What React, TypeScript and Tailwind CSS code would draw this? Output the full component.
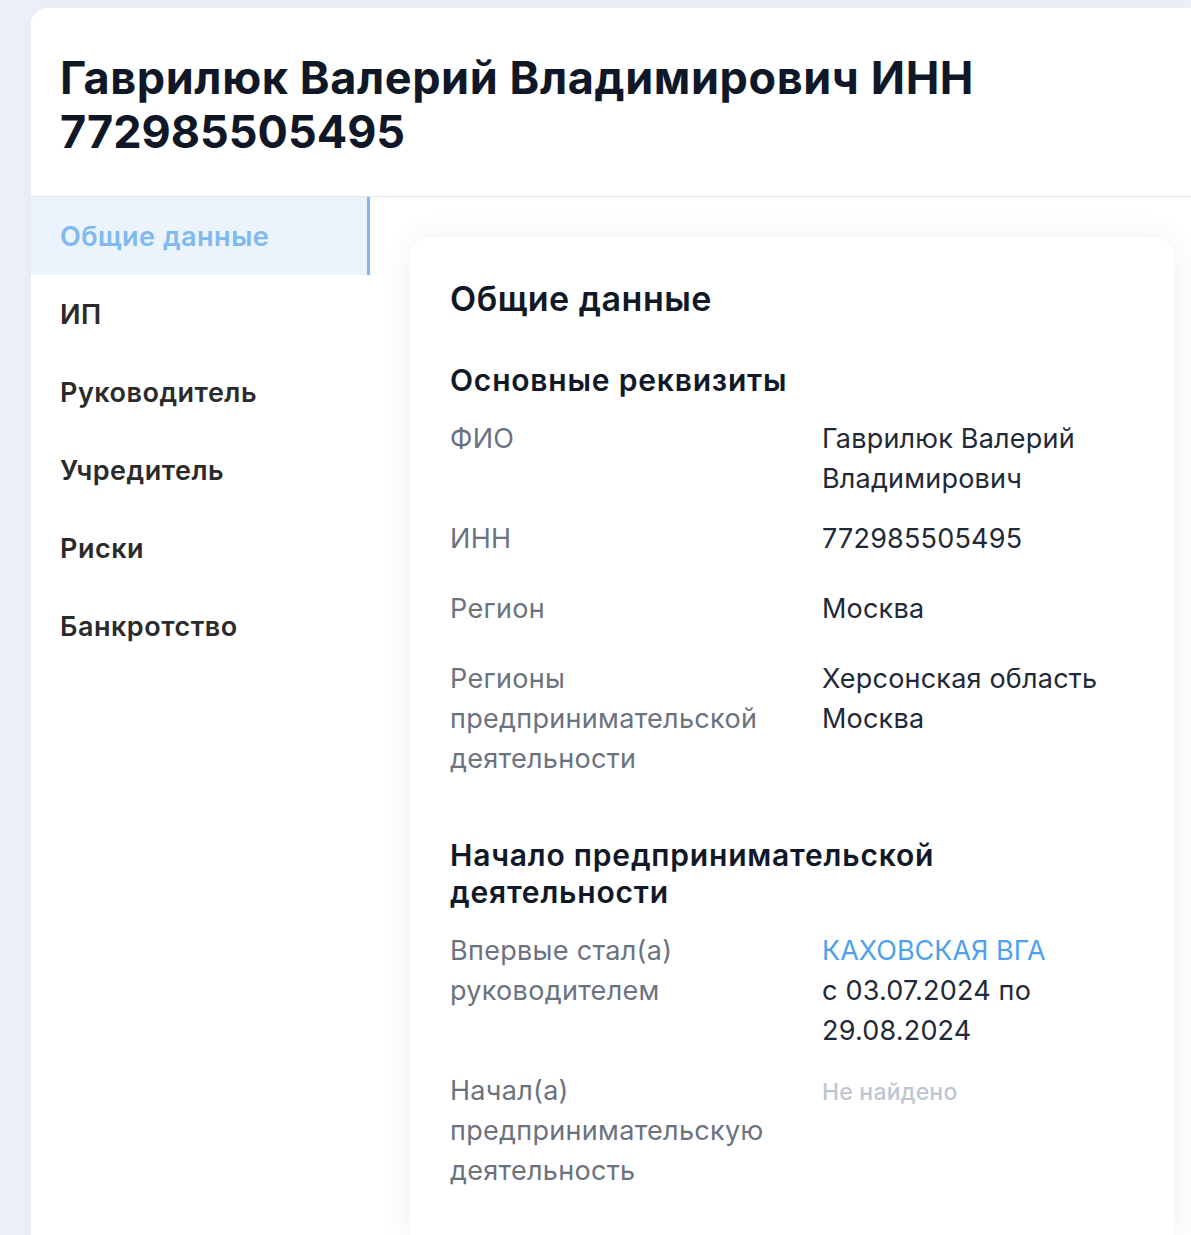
import React from "react";

const font = { fontFamily: 'Inter, "Noto Sans", sans-serif' };

function Row({ label, children }: { label: React.ReactNode; children: React.ReactNode }) {
  return (
    <div className="grid grid-cols-[372px_1fr] min-h-[50px]">
      <div className="text-[27px] leading-[40px] tracking-[0.3px] text-[#6b7280] pr-4">{label}</div>
      <div className="text-[27px] leading-[40px] tracking-[0.2px] text-[#1f2937]">{children}</div>
    </div>
  );
}

export default function App() {
  const nav = ["ИП", "Руководитель", "Учредитель", "Риски", "Банкротство"];
  return (
    <div className="min-h-[1235px] h-[1235px] overflow-hidden bg-[#edf1f7] pl-[31px] pt-[8px]" style={font}>
      <div className="bg-white rounded-tl-[16px] h-full shadow-[0_0_24px_rgba(0,0,0,0.04)]">
        <div className="h-[189px] border-b border-[#e5e7eb] pl-[29px] pt-[43px]">
          <h1 className="text-[45px] leading-[54px] font-bold text-[#101827] tracking-[0.6px]">
            Гаврилюк Валерий Владимирович ИНН
            <br />
            <span className="tracking-[0px]">772985505495</span>
          </h1>
        </div>
        <div className="flex">
          <div className="w-[339px] shrink-0">
            <div className="h-[78px] bg-[#ebf3fc] border-r-[3px] border-[#86b4ea] flex items-center pt-[3px] pl-[29px] text-[27px] tracking-[0.5px] font-semibold text-[#80b8f0]">
              Общие данные
            </div>
            {nav.map((n) => (
              <div key={n} className="h-[78px] flex items-center pt-[3px] pl-[29px] text-[27px] tracking-[0.5px] font-semibold text-[#2b2b2b]">
                {n}
              </div>
            ))}
          </div>
          <div className="pl-[40px] pt-[40px] pr-[17px] flex-1">
            <div className="bg-white rounded-[20px] shadow-[0_0_30px_rgba(30,50,80,0.08)] pl-[40px] pr-[30px] pt-[40px] pb-[60px] min-h-[1000px]">
              <h2 className="text-[34px] leading-[44px] tracking-[0.5px] font-semibold text-[#111827]">Общие данные</h2>
              <h3 className="mt-[40px] text-[30px] leading-[38px] tracking-[0.8px] font-semibold text-[#111827]">Основные реквизиты</h3>
              <div className="mt-[20px] flex flex-col gap-[20px]">
                <Row label="ФИО">
                  Гаврилюк Валерий
                  <br />
                  Владимирович
                </Row>
                <Row label="ИНН">772985505495</Row>
                <Row label="Регион">Москва</Row>
                <Row label={<>Регионы<br />предпринимательской<br />деятельности</>}>
                  Херсонская область
                  <br />
                  Москва
                </Row>
              </div>
              <h3 className="mt-[58px] text-[30px] leading-[37px] tracking-[0.8px] font-semibold text-[#111827]">
                Начало предпринимательской
                <br />
                деятельности
              </h3>
              <div className="mt-[20px] flex flex-col gap-[20px]">
                <Row label={<>Впервые стал(а)<br />руководителем</>}>
                  <span className="text-[#4ea1ec] tracking-[0px]">КАХОВСКАЯ ВГА</span>
                  <br />с 03.07.2024 по
                  <br />
                  29.08.2024
                </Row>
                <Row label={<>Начал(а)<br />предпринимательскую<br />деятельность</>}>
                  <span className="text-[23px] font-medium text-[#bcc6d3]">Не найдено</span>
                </Row>
              </div>
            </div>
          </div>
        </div>
      </div>
    </div>
  );
}
